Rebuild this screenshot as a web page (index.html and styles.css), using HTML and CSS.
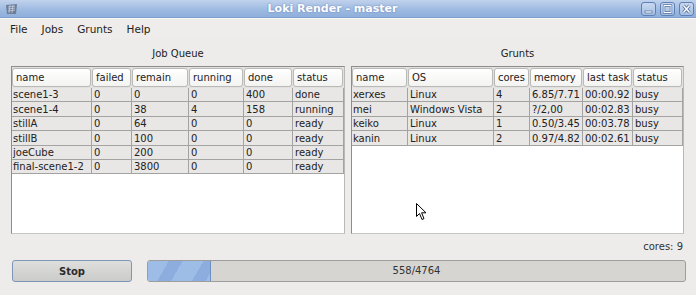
FILE: index.html
```html
<!DOCTYPE html>
<html lang="en">
  <head>
    <meta charset="UTF-8" />
    <title>Loki Render - master</title>
    <link rel="stylesheet" href="styles.css">
  </head>

  <body>
    <div class="window">
      <div class="titlebar">
        <svg class="app-icon" width="13" height="12" viewBox="0 0 13 12">
          <path d="M1 2 L12 1 L11 11 L2 11 Z" fill="#6d7d96" />
          <path d="M3 4 L10 3 M3 6 L10 5 M3 8 L10 7 M5 2 L4 10 M8 2 L7 10" stroke="#c3cde0" stroke-width="0.8" />
        </svg>
        <div class="title">Loki Render - master</div>
        <div class="wm-buttons">
          <span class="wm-btn">
            <svg width="13" height="12" viewBox="0 0 13 12"><rect x="3" y="8" width="7" height="2" fill="#fff" stroke="#4d6d9f" stroke-width="0.7" /></svg>
          </span>
          <span class="wm-btn">
            <svg width="13" height="12" viewBox="0 0 13 12"><rect x="3" y="2.5" width="7" height="7" fill="none" stroke="#4d6d9f" stroke-width="2.4" /><rect x="3" y="2.5" width="7" height="7" fill="none" stroke="#fff" stroke-width="1" /></svg>
          </span>
          <span class="wm-btn">
            <svg width="13" height="12" viewBox="0 0 13 12"><path d="M3.5 2.5 L9.5 9.5 M9.5 2.5 L3.5 9.5" stroke="#4d6d9f" stroke-width="3" /><path d="M3.5 2.5 L9.5 9.5 M9.5 2.5 L3.5 9.5" stroke="#fff" stroke-width="1.4" /></svg>
          </span>
        </div>
      </div>

      <div class="menubar">
        <span>File</span>
        <span>Jobs</span>
        <span>Grunts</span>
        <span>Help</span>
      </div>

      <div class="content">
        <div class="panes">
          <div class="pane">
            <div class="pane-title">Job Queue</div>
            <div class="table-box">
              <table class="jobs">
                <colgroup>
                  <col style="width: 80px" />
                  <col style="width: 40px" />
                  <col style="width: 57px" />
                  <col style="width: 55px" />
                  <col style="width: 49px" />
                  <col />
                </colgroup>
                <thead>
                  <tr>
                    <th><div>name</div></th>
                    <th><div>failed</div></th>
                    <th><div>remain</div></th>
                    <th><div>running</div></th>
                    <th><div>done</div></th>
                    <th><div>status</div></th>
                  </tr>
                </thead>
                <tbody>
                  <tr><td>scene1-3</td><td>0</td><td>0</td><td>0</td><td>400</td><td>done</td></tr>
                  <tr><td>scene1-4</td><td>0</td><td>38</td><td>4</td><td>158</td><td>running</td></tr>
                  <tr><td>stillA</td><td>0</td><td>64</td><td>0</td><td>0</td><td>ready</td></tr>
                  <tr><td>stillB</td><td>0</td><td>100</td><td>0</td><td>0</td><td>ready</td></tr>
                  <tr><td>joeCube</td><td>0</td><td>200</td><td>0</td><td>0</td><td>ready</td></tr>
                  <tr><td>final-scene1-2</td><td>0</td><td>3800</td><td>0</td><td>0</td><td>ready</td></tr>
                </tbody>
              </table>
            </div>
          </div>

          <div class="pane">
            <div class="pane-title">Grunts</div>
            <div class="table-box">
              <table class="grunts">
                <colgroup>
                  <col style="width: 56px" />
                  <col style="width: 86px" />
                  <col style="width: 36px" />
                  <col style="width: 53px" />
                  <col style="width: 50px" />
                  <col />
                </colgroup>
                <thead>
                  <tr>
                    <th><div>name</div></th>
                    <th><div>OS</div></th>
                    <th><div>cores</div></th>
                    <th><div>memory</div></th>
                    <th><div>last task</div></th>
                    <th><div>status</div></th>
                  </tr>
                </thead>
                <tbody>
                  <tr><td>xerxes</td><td>Linux</td><td>4</td><td>6.85/7.71</td><td>00:00.92</td><td>busy</td></tr>
                  <tr><td>mei</td><td>Windows Vista</td><td>2</td><td>?/2,00</td><td>00:02.83</td><td>busy</td></tr>
                  <tr><td>keiko</td><td>Linux</td><td>1</td><td>0.50/3.45</td><td>00:03.78</td><td>busy</td></tr>
                  <tr><td>kanin</td><td>Linux</td><td>2</td><td>0.97/4.82</td><td>00:02.61</td><td>busy</td></tr>
                </tbody>
              </table>
              <svg class="cursor" width="12" height="18" viewBox="0 0 12 18">
                <path d="M0.5 0.5 L0.5 13.5 L3.5 10.5 L6 16.5 L8 15.6 L5.6 9.8 L10 9.8 Z" fill="#fff" stroke="#000" stroke-width="1" stroke-linejoin="round" />
              </svg>
            </div>
          </div>
        </div>

        <div class="cores">cores: 9</div>

        <div class="bottom">
          <button class="stop">Stop</button>
          <div class="progress">
            <div class="progress-fill" style="width: 11.7%"></div>
            <span class="progress-text">558/4764</span>
          </div>
        </div>
      </div>
    </div>
  </body>
</html>
```

FILE: styles.css
```css
* {
  margin: 0;
  padding: 0;
  box-sizing: border-box;
}

body {
  font-family: 'DejaVu Sans', 'Liberation Sans', sans-serif;
  font-size: 10px;
  color: #222;
  background: #edecea;
}

.window {
  width: 696px;
  height: 295px;
  background: #edecea;
  position: relative;
  overflow: hidden;
}

/* title bar */
.titlebar {
  height: 18px;
  display: flex;
  align-items: center;
  padding: 0 2px 0 5px;
  background: linear-gradient(#c0d2ec, #9fbbe2 55%, #8eaedb);
  border-bottom: 1px solid #7f9fcd;
}

.app-icon {
  flex: none;
}

.title {
  flex: 1;
  text-align: center;
  font-size: 11px;
  font-weight: bold;
  color: #fff;
  text-shadow: 0 0 2px #5a7bb0;
  padding-left: 6px;
}

.wm-buttons {
  display: flex;
  gap: 4px;
}

.wm-btn {
  width: 15px;
  height: 14px;
  display: flex;
  align-items: center;
  justify-content: center;
  border: 1px solid #5f80b4;
  border-radius: 3px;
  background: linear-gradient(#c9d8ef, #a6bfe3);
}

/* menu */
.menubar {
  height: 20px;
  display: flex;
  align-items: center;
  padding-left: 3px;
  background: #eeedeb;
  border-top: 1px solid #f7f7f6;
}

.menubar span {
  padding: 0 7px;
  font-size: 10.5px;
  color: #222;
}

/* panes */
.content {
  padding: 0 12px 0 11px;
}

.panes {
  display: grid;
  grid-template-columns: 334px 333px;
  gap: 6px;
}

.pane-title {
  height: 28px;
  padding-top: 3px;
  line-height: 25px;
  text-align: center;
}

.table-box {
  height: 168px;
  border: 1px solid #8d8d8b;
  border-right-color: #b9b9b7;
  border-bottom-color: #c6c6c4;
  background: #fff;
  position: relative;
}

table {
  width: 100%;
  border-collapse: separate;
  border-spacing: 0;
  table-layout: fixed;
}

th {
  padding: 1px 1px 1px 0;
  background: #e2e1df;
  font-weight: normal;
  text-align: left;
}

th div {
  height: 19px;
  line-height: 18px;
  padding-left: 3px;
  border: 1px solid #b9b9b7;
  border-radius: 3px;
  background: linear-gradient(#ffffff, #f3f3f2);
  white-space: nowrap;
  overflow: hidden;
}

td {
  height: 14.4px;
  line-height: 12px;
  padding: 1.4px 2px 0;
  background: #e8e7e5;
  border-right: 1px solid #a3a3a1;
  border-bottom: 1px solid #a3a3a1;
  white-space: nowrap;
  overflow: hidden;
}

td:first-child {
  padding-left: 1px;
}

.cursor {
  position: absolute;
  left: 64px;
  top: 136px;
}

/* footer */
.cores {
  height: 26px;
  line-height: 26px;
  text-align: right;
  padding-right: 1px;
  color: #333;
}

.bottom {
  display: flex;
  gap: 15px;
  height: 22px;
}

.stop {
  width: 120px;
  height: 22px;
  margin-left: 1px;
  font-family: inherit;
  font-size: 10px;
  font-weight: bold;
  color: #2a2a2a;
  border: 1px solid #7e95b8;
  border-radius: 3px;
  background: linear-gradient(#dededc, #cbcbc9);
}

.progress {
  flex: 1;
  margin-right: -2px;
  position: relative;
  border: 1px solid #9d9d9b;
  border-radius: 3px;
  background: #d6d5d2;
  overflow: hidden;
}

.progress-fill {
  height: 100%;
  background:
    repeating-linear-gradient(120deg, #9dbce6 0 18px, #8cadde 18px 30px);
  border-right: 1px solid #6f8fc0;
}

.progress-text {
  position: absolute;
  inset: 0;
  text-align: center;
  line-height: 20px;
  color: #333;
}
```
